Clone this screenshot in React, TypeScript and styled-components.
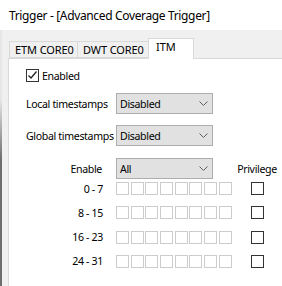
import styled, { createGlobalStyle } from 'styled-components';

const GlobalStyle = createGlobalStyle`
	html, body {
		margin: 0;
		padding: 0;
		background: #f0f0f0;
	}
	body {
		font-family: 'Noto Sans', 'Liberation Sans', sans-serif;
		font-size: 10.6px;
		letter-spacing: -0.35px;
		color: #000;
	}
`;

const Window = styled.div`
	width: 282px;
	height: 286px;
	overflow: hidden;
	display: flex;
	flex-direction: column;
	background: #f0f0f0;
`;

const TitleBar = styled.header`
	height: 30px;
	flex: none;
	background: #fff;
	padding-left: 9px;
	display: flex;
	align-items: center;
	font-size: 12px;
	letter-spacing: -0.35px;
	color: #000;
`;

const Body = styled.div`
	flex: 1;
	display: flex;
	flex-direction: column;
	padding: 8px 0 0 6px;
	border-left: 2px solid;
	border-image: linear-gradient(to bottom, #e6e6e6 0px, #e6e6e6 70px, #6e6e6e 130px) 1;
`;

const TabStrip = styled.div`
	display: flex;
	align-items: flex-end;
	padding-left: 1px;
	height: 20px;
	position: relative;
	z-index: 1;
`;

const Tab = styled.div<{ $w: number; $active?: boolean }>`
	box-sizing: border-box;
	width: ${(p) => p.$w}px;
	height: ${(p) => (p.$active ? 21 : 17)}px;
	margin-bottom: ${(p) => (p.$active ? -1 : 0)}px;
	margin-left: -1px;
	border: 1px solid #d9d9d9;
	border-bottom: ${(p) => (p.$active ? 'none' : '1px solid #d9d9d9')};
	background: ${(p) => (p.$active ? '#fff' : '#f0f0f0')};
	padding: ${(p) => (p.$active ? '1px 0 0 7px' : '1px 0 0 5px')};
	font-size: 11px;
	line-height: 14px;
	letter-spacing: -0.1px;
	white-space: nowrap;
	&:first-child {
		margin-left: 0;
	}
`;

const Panel = styled.section`
	flex: 1;
	background: #fff;
	border: 1px solid #d9d9d9;
	border-right: none;
	border-bottom: none;
	padding: 10px 0 0 17px;
	display: flex;
	flex-direction: column;
	gap: 11px;
`;

const CheckRow = styled.label`
	display: flex;
	align-items: center;
	gap: 3px;
	height: 13px;
`;

const Check = styled.span<{ $disabled?: boolean }>`
	box-sizing: border-box;
	width: 13px;
	height: 13px;
	flex: none;
	background: #fff;
	border: 1px solid ${(p) => (p.$disabled ? '#cccccc' : '#333333')};
	display: flex;
	align-items: center;
	justify-content: center;
`;

const FieldRow = styled.div`
	display: grid;
	grid-template-columns: 90px 97px;
	align-items: center;
	height: 21px;
`;

const Label = styled.span<{ $right?: number }>`
	text-align: ${(p) => (p.$right !== undefined ? 'right' : 'left')};
	padding-right: ${(p) => p.$right ?? 0}px;
	white-space: nowrap;
`;

const Select = styled.div`
	box-sizing: border-box;
	width: 97px;
	height: 21px;
	background: #e1e1e1;
	border: 1px solid #adadad;
	display: flex;
	align-items: center;
	justify-content: space-between;
	padding: 0 4px 0 3px;
`;

const HeadRow = styled.div`
	display: grid;
	grid-template-columns: 90px 117px 48px;
	align-items: center;
	height: 21px;
	margin-top: 1px;
`;

const MaskGrid = styled.div`
	display: grid;
	grid-template-columns: 90px 117px 48px;
	grid-auto-rows: 13px;
	row-gap: 11.3px;
	align-items: center;
	margin-top: 3px;
`;

const Boxes = styled.div`
	display: flex;
	gap: 1.7px;
`;

const Center = styled.div`
	display: flex;
	justify-content: center;
	white-space: nowrap;
`;

const Chevron = () => (
	<svg width="9" height="5" viewBox="0 0 9 5">
		<path d="M0.5 0.5 L4.5 4.5 L8.5 0.5" fill="none" stroke="#606060" strokeWidth="1" />
	</svg>
);

const Tick = () => (
	<svg width="11" height="11" viewBox="0 0 11 11">
		<path d="M1.5 5.5 L4 8 L9.5 1.5" fill="none" stroke="#222" strokeWidth="1.3" />
	</svg>
);

const ranges = ['0 - 7', '8 - 15', '16 - 23', '24 - 31'];

export default function App() {
	return (
		<>
			<GlobalStyle />
			<Window>
				<TitleBar>Trigger - [Advanced Coverage Trigger]</TitleBar>
				<Body>
					<TabStrip>
						<Tab $w={69}>ETM CORE0</Tab>
						<Tab $w={72}>DWT CORE0</Tab>
						<Tab $w={46} $active>
							ITM
						</Tab>
					</TabStrip>
					<Panel>
						<CheckRow>
							<Check>
								<Tick />
							</Check>
							Enabled
						</CheckRow>
						<FieldRow>
							<Label>Local timestamps</Label>
							<Select>
								Disabled
								<Chevron />
							</Select>
						</FieldRow>
						<FieldRow>
							<Label>Global timestamps</Label>
							<Select>
								Disabled
								<Chevron />
							</Select>
						</FieldRow>
						<div>
							<HeadRow>
								<Label $right={14}>Enable</Label>
								<Select>
									All
									<Chevron />
								</Select>
								<Center>Privilege</Center>
							</HeadRow>
							<MaskGrid>
								{ranges.map((r) => [
									<Label key={r + 'l'} $right={13}>
										{r}
									</Label>,
									<Boxes key={r + 'b'}>
										{Array.from({ length: 8 }, (_, i) => (
											<Check key={i} $disabled />
										))}
									</Boxes>,
									<Center key={r + 'p'}>
										<Check />
									</Center>,
								])}
							</MaskGrid>
						</div>
					</Panel>
				</Body>
			</Window>
		</>
	);
}
